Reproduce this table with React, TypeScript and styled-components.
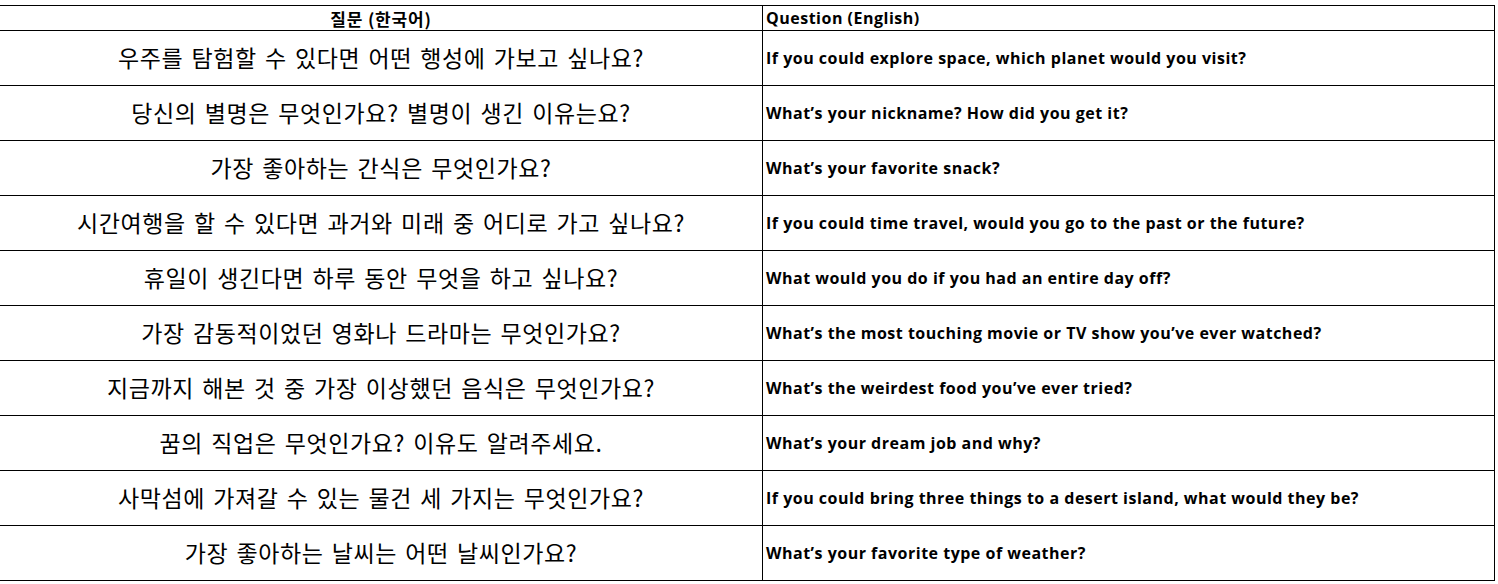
import React from "react";
import styled, { createGlobalStyle } from "styled-components";

const Global = createGlobalStyle`
  html, body { margin: 0; padding: 0; background: #ffffff; }
  body { font-family: "Noto Sans CJK KR", "Noto Sans", sans-serif; color: #000; }
`;

const Sheet = styled.div`
  padding-top: 5px;
  width: 1495px;
`;

const Table = styled.div`
  border-top: 1px solid #000;
  display: flex;
  flex-direction: column;
`;

const Row = styled.div<{ $head?: boolean }>`
  display: grid;
  grid-template-columns: 763px 1fr;
  height: ${(p) => (p.$head ? 25 : 55)}px;
  box-sizing: border-box;
  border-bottom: 1px solid #000;
  border-right: 1px solid #000;
`;

const KoCell = styled.div<{ $head?: boolean }>`
  box-sizing: border-box;
  border-right: 1px solid #000;
  display: flex;
  align-items: center;
  justify-content: center;
  padding-bottom: ${(p) => (p.$head ? 0 : 3)}px;
  font-family: "Noto Sans CJK KR", sans-serif;
  font-size: ${(p) => (p.$head ? 17 : 23)}px;
  font-weight: ${(p) => (p.$head ? 700 : 400)};
  letter-spacing: ${(p) => (p.$head ? 0.8 : 0.6)}px;
  word-spacing: ${(p) => (p.$head ? 0 : 2.5)}px;
  white-space: nowrap;
`;

const EnCell = styled.div`
  display: flex;
  align-items: center;
  padding-left: 3px;
  padding-bottom: 1px;
  font-family: "Open Sans", "Noto Sans", sans-serif;
  font-size: 16px;
  font-weight: 700;
  letter-spacing: 0.5px;
  white-space: nowrap;
`;

const rows: [string, string][] = [
  ["우주를 탐험할 수 있다면 어떤 행성에 가보고 싶나요?", "If you could explore space, which planet would you visit?"],
  ["당신의 별명은 무엇인가요? 별명이 생긴 이유는요?", "What’s your nickname? How did you get it?"],
  ["가장 좋아하는 간식은 무엇인가요?", "What’s your favorite snack?"],
  ["시간여행을 할 수 있다면 과거와 미래 중 어디로 가고 싶나요?", "If you could time travel, would you go to the past or the future?"],
  ["휴일이 생긴다면 하루 동안 무엇을 하고 싶나요?", "What would you do if you had an entire day off?"],
  ["가장 감동적이었던 영화나 드라마는 무엇인가요?", "What’s the most touching movie or TV show you’ve ever watched?"],
  ["지금까지 해본 것 중 가장 이상했던 음식은 무엇인가요?", "What’s the weirdest food you’ve ever tried?"],
  ["꿈의 직업은 무엇인가요? 이유도 알려주세요.", "What’s your dream job and why?"],
  ["사막섬에 가져갈 수 있는 물건 세 가지는 무엇인가요?", "If you could bring three things to a desert island, what would they be?"],
  ["가장 좋아하는 날씨는 어떤 날씨인가요?", "What’s your favorite type of weather?"],
];

export default function App() {
  return (
    <>
      <Global />
      <Sheet>
        <Table>
          <Row $head>
            <KoCell $head>질문 (한국어)</KoCell>
            <EnCell>Question (English)</EnCell>
          </Row>
          {rows.map(([ko, en]) => (
            <Row key={en}>
              <KoCell>{ko}</KoCell>
              <EnCell>{en}</EnCell>
            </Row>
          ))}
        </Table>
      </Sheet>
    </>
  );
}
